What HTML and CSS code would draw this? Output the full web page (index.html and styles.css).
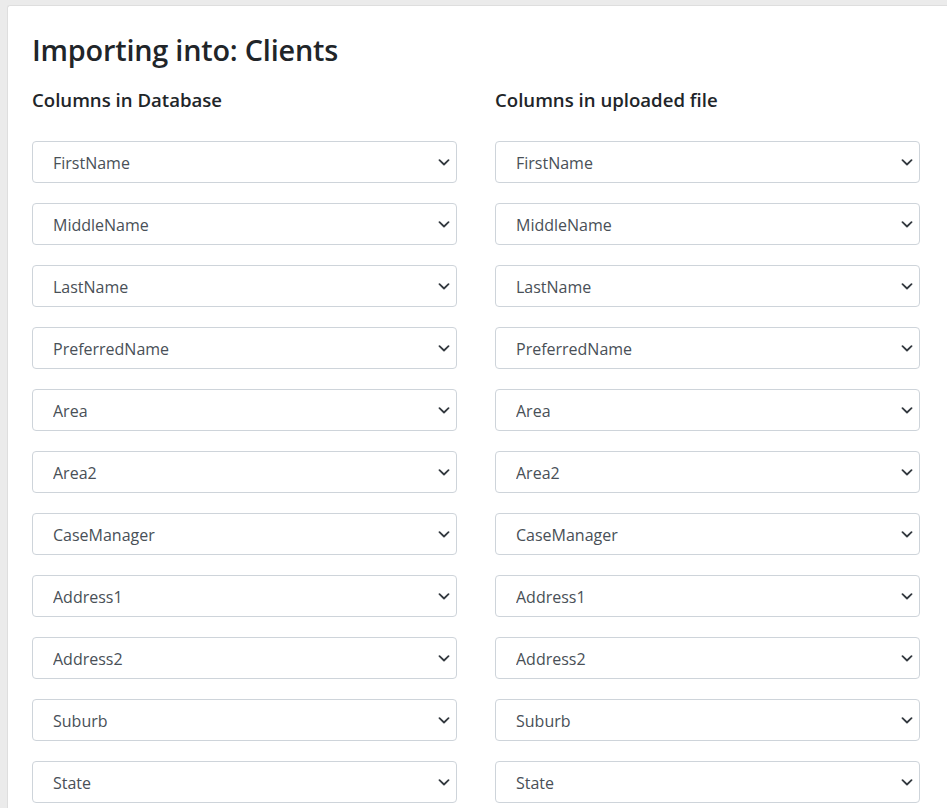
FILE: index.html
```html
<!DOCTYPE html>
<html lang="en">
<head>
<meta charset="utf-8">
<title>Importing into: Clients</title>
<link rel="stylesheet" href="styles.css">
</head>
<body>
<div class="card">
  <h2 class="title">Importing into: Clients</h2>
  <div class="columns">
    <div class="col">
      <h5 class="col-head">Columns in Database</h5>
      <select class="form-select"><option>FirstName</option></select>
      <select class="form-select"><option>MiddleName</option></select>
      <select class="form-select"><option>LastName</option></select>
      <select class="form-select"><option>PreferredName</option></select>
      <select class="form-select"><option>Area</option></select>
      <select class="form-select"><option>Area2</option></select>
      <select class="form-select"><option>CaseManager</option></select>
      <select class="form-select"><option>Address1</option></select>
      <select class="form-select"><option>Address2</option></select>
      <select class="form-select"><option>Suburb</option></select>
      <select class="form-select"><option>State</option></select>
    </div>
    <div class="col">
      <h5 class="col-head">Columns in uploaded file</h5>
      <select class="form-select"><option>FirstName</option></select>
      <select class="form-select"><option>MiddleName</option></select>
      <select class="form-select"><option>LastName</option></select>
      <select class="form-select"><option>PreferredName</option></select>
      <select class="form-select"><option>Area</option></select>
      <select class="form-select"><option>Area2</option></select>
      <select class="form-select"><option>CaseManager</option></select>
      <select class="form-select"><option>Address1</option></select>
      <select class="form-select"><option>Address2</option></select>
      <select class="form-select"><option>Suburb</option></select>
      <select class="form-select"><option>State</option></select>
    </div>
  </div>
</div>
</body>
</html>
```
FILE: styles.css
```css
html, body {
  margin: 0;
  padding: 0;
}
body {
  background: #ebebeb;
  font-family: "Open Sans", "Noto Sans", sans-serif;
  color: #212529;
  padding: 5px 0 0 7px;
  overflow: hidden;
}
.card {
  background: #fff;
  border: 1px solid #dedede;
  border-right: none;
  border-radius: 3px 0 0 0;
  padding: 24px 27px 40px 24px;
  min-height: 900px;
}
.title {
  margin: 0;
  font-size: 28.8px;
  font-weight: 600;
  line-height: 40px;
  letter-spacing: -0.2px;
}
.columns {
  display: grid;
  grid-template-columns: 1fr 1fr;
  column-gap: 38px;
  margin-top: 18px;
}
.col {
  display: flex;
  flex-direction: column;
  gap: 20px;
}
.col-head {
  margin: 0 0 9px 0;
  font-size: 18.6px;
  font-weight: 600;
  line-height: 24px;
}
.form-select {
  -webkit-appearance: none;
  appearance: none;
  display: block;
  width: 100%;
  height: 42px;
  margin: 0;
  padding: 2px 30px 0 20px;
  font-family: "Open Sans", "Noto Sans", sans-serif;
  font-size: 16px;
  color: #495057;
  background-color: #fff;
  background-image: url("data:image/svg+xml,%3csvg xmlns='http://www.w3.org/2000/svg' viewBox='0 0 12 7'%3e%3cpath fill='none' stroke='%23343a40' stroke-width='1.8' stroke-linecap='round' stroke-linejoin='round' d='M1.5 1.2l4.5 4.3 4.5-4.3'/%3e%3c/svg%3e");
  background-repeat: no-repeat;
  background-position: right 6px center;
  background-size: 12px 7px;
  border: 1px solid #ced4da;
  border-radius: 4px;
}
```
